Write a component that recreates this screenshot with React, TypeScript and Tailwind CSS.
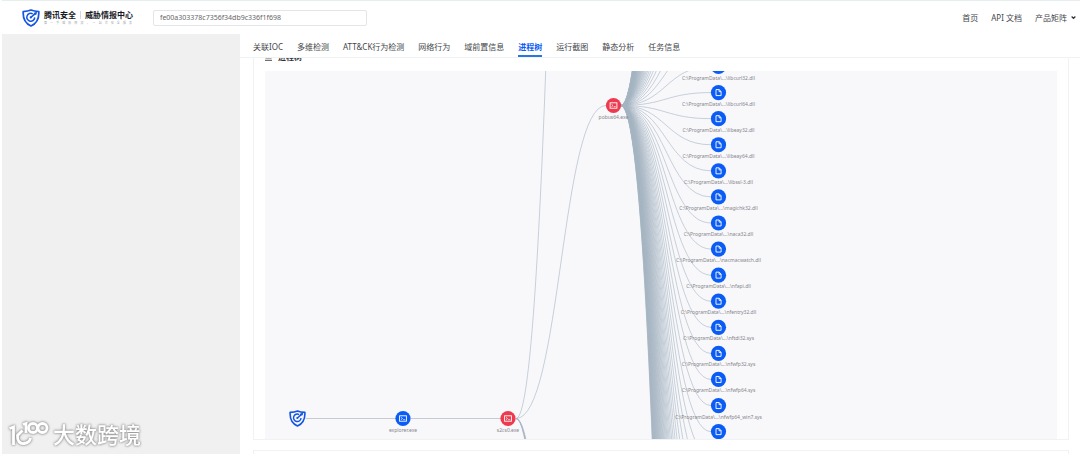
const tabs = ['关联IOC', '多维检测', 'ATT&CK行为检测', '网络行为', '域前置信息', '进程树', '运行截图', '静态分析', '任务信息'];

const files = [
  'libcurl32.dll',
  'libcurl64.dll',
  'libeay32.dll',
  'libeay64.dll',
  'libssl-3.dll',
  'magichk32.dll',
  'naca32.dll',
  'nacmacwatch.dll',
  'nfapi.dll',
  'nfentry32.dll',
  'nftdi32.sys',
  'nfwfp32.sys',
  'nfwfp64.sys',
  'nfwfp64_win7.sys',
  '',
];

const ROW = 26.08;
const FIRST_ROW = -4.5;

function link(x1: number, y1: number, x2: number, y2: number) {
  const mid = (x1 + x2) / 2;
  return `M${x1} ${y1}C${mid} ${y1} ${mid} ${y2} ${x2} ${y2}`;
}

function ShieldMark({ className, ...rest }: { className?: string; x?: number; y?: number; width?: number; height?: number }) {
  return (
    <svg viewBox="0 0 24 24" fill="none" className={className} aria-hidden="true" {...rest}>
      <path
        d="M12 1.4C9 2.6 5.4 3.2 1.6 3.4c-.5 9 2.3 15.6 10.4 19.2C20.1 19 22.9 12.4 22.4 3.4 18.6 3.2 15 2.6 12 1.4Z"
        stroke="#1456e0"
        strokeWidth="2.3"
        strokeLinejoin="round"
      />
      <path d="M14.3 6.4A5.3 5.3 0 1 0 17 11.2" stroke="#1456e0" strokeWidth="2" />
      <path d="M11.8 11.2 L18.5 5.5" stroke="#1456e0" strokeWidth="2" />
      <path d="M15.5 7.6 16 4.9 20 3.8 19.2 7.5Z" fill="#1456e0" />
      <circle cx="11.7" cy="11.3" r="1.5" fill="#1456e0" />
    </svg>
  );
}

function ProcessNode({ x, y, name, color }: { x: number; y: number; name: string; color: string }) {
  return (
    <g>
      <circle cx={x} cy={y} r="7.6" fill={color} />
      <rect x={x - 3.4} y={y - 2.7} width="6.8" height="5.4" fill="none" stroke="#fff" strokeWidth="0.9" />
      <path d={`M${x - 2} ${y - 1.2}l1.5 1.2l-1.5 1.2M${x + 0.2} ${y + 1.1}h2`} fill="none" stroke="#fff" strokeWidth="0.7" />
      <text x={x} y={y + 13} textAnchor="middle" fill="#85858a">{name}</text>
    </g>
  );
}

function FileNode({ x, y, name }: { x: number; y: number; name: string }) {
  return (
    <g>
      <circle cx={x} cy={y} r="7.6" fill="#0a5cf5" />
      <path
        d={`M${x - 2.5} ${y - 3}h3.2l1.9 1.9v4.1h-5.1zM${x + 0.6} ${y - 2.9}v2h2`}
        fill="none"
        stroke="#fff"
        strokeWidth="0.9"
      />
      {name && (
        <text x={x} y={y + 13} textAnchor="middle" fill="#85858a">{`C:\\ProgramData\\...\\${name}`}</text>
      )}
    </g>
  );
}

function ProcessTree() {
  const fan = Array.from({ length: 115 }, (_, i) => i - 55);
  const lower = Array.from({ length: 5 }, (_, i) => 1500 + i * 90);
  return (
    <svg className="block h-[368px] w-full bg-[#f8f8fb] text-[5px]" role="img" aria-label="进程树">
      <g fill="none" stroke="#a5b3c1" strokeWidth="0.6">
        <path d="M41 347.5H131M146 347.5H236" stroke="#b9bfc7" strokeWidth="0.8" />
        <path d={link(251, 347.5, 341, 34.5)} />
        <path d={link(251, 347.5, 341, -1400)} />
        {lower.map((y) => (
          <path key={y} d={link(251, 347.5, 341, y)} />
        ))}
        {fan.map((i) => (
          <path key={i} d={link(356, 34.5, 446, FIRST_ROW + i * ROW)} />
        ))}
      </g>
      <ShieldMark x={24} y={339} width={17} height={17} />
      <ProcessNode x={138} y={347.5} name="explorer.exe" color="#0a5cf5" />
      <ProcessNode x={243} y={347.5} name="s2cs0.exe" color="#ee3a4e" />
      <ProcessNode x={348.5} y={34.5} name="pobus64.exe" color="#ee3a4e" />
      {files.map((name, i) => (
        <FileNode key={i} x={453.5} y={FIRST_ROW + i * ROW} name={name} />
      ))}
    </svg>
  );
}

function Header() {
  return (
    <header className="flex h-[34px] items-center border-t border-[#e6eef0] bg-white pr-1 pl-5">
      <a href="#home" className="flex items-center gap-1">
        <ShieldMark className="size-[18px]" />
        <span className="flex flex-col gap-px">
          <span className="flex items-center gap-1 text-[8px] leading-[10px] font-bold text-[#16181d]">
            <span>腾讯安全</span>
            <span className="h-2 w-px bg-[#d5d7dc]" />
            <span>威胁情报中心</span>
          </span>
          <span className="w-[88px] text-[3px] leading-[4px] text-[#a5a8b0] [text-align-last:justify]">第一手威胁情报，一站式安全服务</span>
        </span>
      </a>
      <input
        type="text"
        aria-label="搜索"
        defaultValue="fe00a303378c7356f34db9c336f1f698"
        className="ml-5 h-4 w-[214px] rounded-[2px] border border-[#e3e5e9] bg-white px-1.5 text-[7px] text-[#666] outline-none"
      />
      <nav className="ml-auto flex items-center gap-[13px] text-[8px] text-[#44464a]">
        <a href="#home">首页</a>
        <a href="#api">API 文档</a>
        <button type="button" className="flex items-center gap-1">
          产品矩阵
          <svg viewBox="0 0 8 8" className="size-[5px]" fill="none" stroke="#303236" strokeWidth="2" aria-hidden="true">
            <path d="M1 2.5l3 3 3-3" />
          </svg>
        </button>
      </nav>
    </header>
  );
}

function Watermark() {
  return (
    <div className="absolute bottom-[6px] left-[9px] flex items-center gap-1 text-[22px] leading-[28px] font-medium text-white [filter:drop-shadow(0_0_1px_#888)_drop-shadow(0_0_1px_#bbb)]">
      <svg viewBox="0 0 40 28" className="h-7 w-10" fill="none" stroke="#fff" strokeWidth="2.8" aria-hidden="true">
        <path d="M.5 8.5 4.5 7V25" />
        <path d="M13.500 10.500 8.500 15.500C8 21 11 24 15 23.500c3.500-.5 6-2.500 6.500-5.500" />
        <path d="M14 4.500l3-1V13" />
        <circle cx="24" cy="8" r="4.500" />
        <circle cx="33.500" cy="8" r="4.500" />
      </svg>
      <span>大数跨境</span>
    </div>
  );
}

export default function App() {
  return (
    <div className="relative flex h-screen flex-col overflow-hidden bg-white pl-0.5 font-['Noto_Sans','Noto_Sans_CJK_SC',sans-serif]">
      <Header />
      <div className="flex min-h-0 flex-1">
        <aside className="w-[238px] shrink-0 bg-[#f0f0f0]" />
        <main className="flex min-w-0 flex-1 flex-col">
          <nav className="flex h-[24px] shrink-0 gap-3.5 border-b border-[#f0f3f4] pl-[13px] text-[8px] text-[#44464a]">
            {tabs.map((tab) => (
              <a
                key={tab}
                href={`#${tab}`}
                className={
                  tab === '进程树'
                    ? 'flex items-center border-b-2 border-[#2a76e0] pt-1 font-bold text-[#0a5cf5]'
                    : 'flex items-center border-b-2 border-transparent pt-1'
                }
              >
                {tab}
              </a>
            ))}
          </nav>
          <div className="min-h-0 flex-1 overflow-hidden pr-[11px] pl-[13px]">
            <section className="-mt-4 border border-[#f0f2f4] pr-[11px] pl-[11px]">
              <h2 className="flex h-7 items-start gap-1.5 pt-2 text-[8px] leading-[12px] font-bold text-[#303236]">
                <svg viewBox="0 0 8 8" className="mt-[3px] size-[7px]" fill="none" stroke="#303236" aria-hidden="true">
                  <path d="M.5 .5h7v4h-7zM0 7.200h8" />
                </svg>
                进程树
              </h2>
              <ProcessTree />
            </section>
            <section className="mt-2.5 h-8 border border-[#f0f2f4]" />
          </div>
        </main>
      </div>
      <Watermark />
    </div>
  );
}
